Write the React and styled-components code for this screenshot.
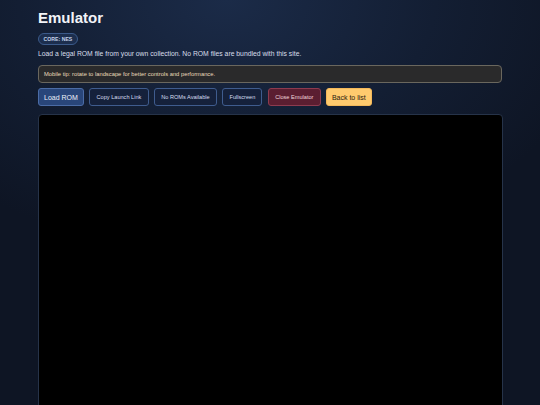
import styled, {createGlobalStyle} from "styled-components"

const GlobalStyle = createGlobalStyle`
    html, body {
        margin: 0;
        padding: 0;
        height: 100%;
        background: #0d1322;
    }
    body {
        font-family: "Liberation Sans", Arial, sans-serif;
        color: #e6ebf5;
        overflow: hidden;
    }
`

const Page = styled.div`
    min-height: 405px;
    background: radial-gradient(ellipse 70% 60% at 42% 0%, #1b2b48 0%, #131e33 55%, #0e1524 100%);
    padding: 9px 38px 0 38px;
    box-sizing: border-box;
`

const Title = styled.h1`
    margin: 0;
    font-size: 15px;
    font-weight: 700;
    line-height: 18px;
    color: #f2f4f8;
`

const Badge = styled.span`
    display: inline-block;
    margin-top: 2px;
    padding: 0 4.5px;
    height: 10px;
    line-height: 10px;
    border: 1px solid #3b5a8a;
    border-radius: 6px;
    background: #1c2e4e;
    color: #c4d2ea;
    font-size: 5.2px;
    font-weight: 700;
`

const Intro = styled.p`
    margin: 4px 0 0;
    font-size: 6.8px;
    line-height: 9px;
    color: #d7deea;
`

const Tip = styled.div`
    margin-top: 7px;
    height: 18px;
    display: flex;
    align-items: center;
    padding: 0 5px;
    box-sizing: border-box;
    border: 1px solid #6a675e;
    border-radius: 4px;
    background: #2a2a2b;
    color: #eadcbc;
    font-size: 5.8px;
`

const Toolbar = styled.div`
    display: flex;
    gap: 5.5px;
    margin-top: 5px;
`

const tones = {
    primary: {bg: "#29467a", border: "#4b6ca6", color: "#eef2fa", size: "7px", pad: "5px"},
    outline: {bg: "#15213b", border: "#3f5c8e", color: "#d5deef", size: "5.6px", pad: "6.2px"},
    danger: {bg: "#5b1e31", border: "#8d3b4f", color: "#f0d7dc", size: "5.6px", pad: "6.2px"},
    warm: {bg: "#ffca6e", border: "#f3b85a", color: "#2b2010", size: "7px", pad: "4.8px"},
}

const Button = styled.button`
    height: 18px;
    padding: 0 ${p => tones[p.$tone].pad};
    border-radius: 3px;
    border: 1px solid ${p => tones[p.$tone].border};
    background: ${p => tones[p.$tone].bg};
    color: ${p => tones[p.$tone].color};
    font-family: inherit;
    font-size: ${p => tones[p.$tone].size};
    white-space: nowrap;
`

const Screen = styled.div`
    margin-top: 8px;
    width: 463px;
    height: 310px;
    background: #000;
    border: 1px solid #263349;
    border-radius: 4px;
`

const App = () => (
    <>
        <GlobalStyle />
        <Page>
            <Title>Emulator</Title>
            <Badge>CORE: NES</Badge>
            <Intro>Load a legal ROM file from your own collection. No ROM files are bundled with this site.</Intro>
            <Tip>Mobile tip: rotate to landscape for better controls and performance.</Tip>
            <Toolbar>
                <Button $tone="primary">Load ROM</Button>
                <Button $tone="outline">Copy Launch Link</Button>
                <Button $tone="outline">No ROMs Available</Button>
                <Button $tone="outline">Fullscreen</Button>
                <Button $tone="danger">Close Emulator</Button>
                <Button $tone="warm">Back to list</Button>
            </Toolbar>
            <Screen />
        </Page>
    </>
)

export default App
